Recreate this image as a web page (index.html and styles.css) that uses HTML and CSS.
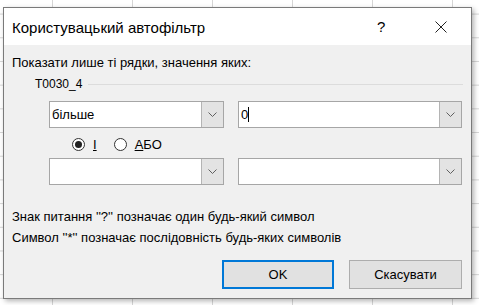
FILE: index.html
```html
<!DOCTYPE html>
<html>
<head>
  <title>Користувацький автофільтр</title>
  <link rel="stylesheet" href="styles.css">
</head>
<body>
  <div class="dialog">
    <div class="titlebar">
      <span class="title">Користувацький автофільтр</span>
      <span class="btn-help">?</span>
      <span class="btn-close">
        <svg width="12" height="12" viewBox="0 0 12 12"><path d="M0.5 0.5 L11.5 11.5 M11.5 0.5 L0.5 11.5" stroke="#222" stroke-width="1"/></svg>
      </span>
    </div>

    <div class="content">
      <div class="prompt">Показати лише ті рядки, значення яких:</div>

      <div class="group">
        <span class="group-label">T0030_4</span>
        <span class="group-line"></span>
      </div>

      <div class="combo-row">
        <div class="combo combo-op">
          <span class="combo-text">більше</span>
          <span class="combo-btn"><svg width="9" height="5" viewBox="0 0 9 5"><path d="M0.5 0.5 L4.5 4.5 L8.5 0.5" fill="none" stroke="#606060"/></svg></span>
        </div>
        <div class="combo combo-val">
          <span class="combo-text">0<span class="caret"></span></span>
          <span class="combo-btn"><svg width="9" height="5" viewBox="0 0 9 5"><path d="M0.5 0.5 L4.5 4.5 L8.5 0.5" fill="none" stroke="#606060"/></svg></span>
        </div>
      </div>

      <div class="radio-row">
        <span class="radio checked"></span>
        <span class="radio-label"><u>І</u></span>
        <span class="radio"></span>
        <span class="radio-label"><u>А</u>БО</span>
      </div>

      <div class="combo-row second">
        <div class="combo combo-op">
          <span class="combo-text"></span>
          <span class="combo-btn"><svg width="9" height="5" viewBox="0 0 9 5"><path d="M0.5 0.5 L4.5 4.5 L8.5 0.5" fill="none" stroke="#606060"/></svg></span>
        </div>
        <div class="combo combo-val">
          <span class="combo-text"></span>
          <span class="combo-btn"><svg width="9" height="5" viewBox="0 0 9 5"><path d="M0.5 0.5 L4.5 4.5 L8.5 0.5" fill="none" stroke="#606060"/></svg></span>
        </div>
      </div>

      <div class="hint first">Знак питання ''?'' позначає один будь-який символ</div>
      <div class="hint">Символ ''*'' позначає послідовність будь-яких символів</div>

      <div class="buttons">
        <button class="btn btn-ok">OK</button>
        <button class="btn btn-cancel">Скасувати</button>
      </div>
    </div>
  </div>
</body>
</html>
```

FILE: styles.css
```css
body {
  margin: 0;
  width: 479px;
  height: 305px;
  overflow: hidden;
  font-family: "Liberation Sans", Arial, sans-serif;
  font-size: 13px;
  color: #000;
  background-color: #fff;
  background-image:
    linear-gradient(to right, #d6d6d6 1px, transparent 1px),
    linear-gradient(to bottom, #d6d6d6 1px, transparent 1px);
  background-size: 80px 23.7px;
  background-position: 52px 13.6px;
}

.dialog {
  width: 469px;
  height: 292px;
  margin: 7px 0 0 3px;
  border: 1px solid #7a7a7a;
  box-sizing: border-box;
  background-color: #f0f0f0;
  box-shadow: 2px 2px 5px rgba(0, 0, 0, 0.3);
}

.titlebar {
  height: 37px;
  background-color: #fff;
  display: flex;
  align-items: center;
  padding-left: 8px;
}

.title {
  font-size: 15px;
  flex: 1;
  padding-top: 1px;
}

.btn-help {
  font-size: 15px;
  width: 8px;
  margin-right: 50px;
}

.btn-close {
  width: 12px;
  height: 12px;
  margin-right: 24px;
  display: flex;
}

.content {
  padding: 0 8px;
}

.prompt {
  margin-top: 10px;
  line-height: 16px;
}

.group {
  margin-top: 5px;
  display: flex;
  align-items: center;
  padding-left: 23px;
  line-height: 16px;
  font-size: 12px;
}

.group-line {
  flex: 1;
  height: 1px;
  background-color: #dcdcdc;
  margin-left: 6px;
}

.combo-row {
  display: flex;
  gap: 14px;
  padding-left: 37px;
  margin-top: 9px;
}

.combo-row.second {
  margin-top: 6px;
}

.combo {
  height: 27px;
  box-sizing: border-box;
  border: 1px solid #a6a6a6;
  background-color: #fff;
  display: flex;
}

.combo-op {
  width: 175px;
}

.combo-val {
  width: 224px;
}

.combo-text {
  flex: 1;
  display: flex;
  align-items: center;
  padding-left: 2px;
  font-size: 13px;
}

.caret {
  width: 1px;
  height: 15px;
  background-color: #000;
}

.combo-btn {
  width: 21px;
  border-left: 1px solid #b4b4b4;
  background-color: #e3e3e3;
  display: flex;
  align-items: center;
  justify-content: center;
}

.radio-row {
  display: flex;
  align-items: center;
  height: 16px;
  margin-top: 8px;
  padding-left: 60px;
}

.radio {
  width: 13px;
  height: 13px;
  box-sizing: border-box;
  border: 1px solid #333;
  border-radius: 50%;
  background-color: #fff;
  position: relative;
}

.radio.checked::after {
  content: "";
  position: absolute;
  left: 2px;
  top: 2px;
  width: 7px;
  height: 7px;
  border-radius: 50%;
  background-color: #222;
}

.radio-label {
  margin-left: 8px;
  margin-right: 17px;
  font-size: 13px;
}

.hint {
  margin-top: 5px;
  line-height: 16px;
}

.hint.first {
  margin-top: 24px;
}

.buttons {
  display: flex;
  justify-content: flex-end;
  gap: 15px;
  margin-top: 14px;
  padding-right: 1px;
}

.btn {
  height: 29px;
  box-sizing: border-box;
  background-color: #e1e1e1;
  border: 1px solid #adadad;
  font-family: "Liberation Sans", Arial, sans-serif;
  font-size: 13px;
  color: #000;
  padding: 0;
}

.btn-ok {
  width: 112px;
  border: 2px solid #0078d7;
}

.btn-cancel {
  width: 113px;
}
```
